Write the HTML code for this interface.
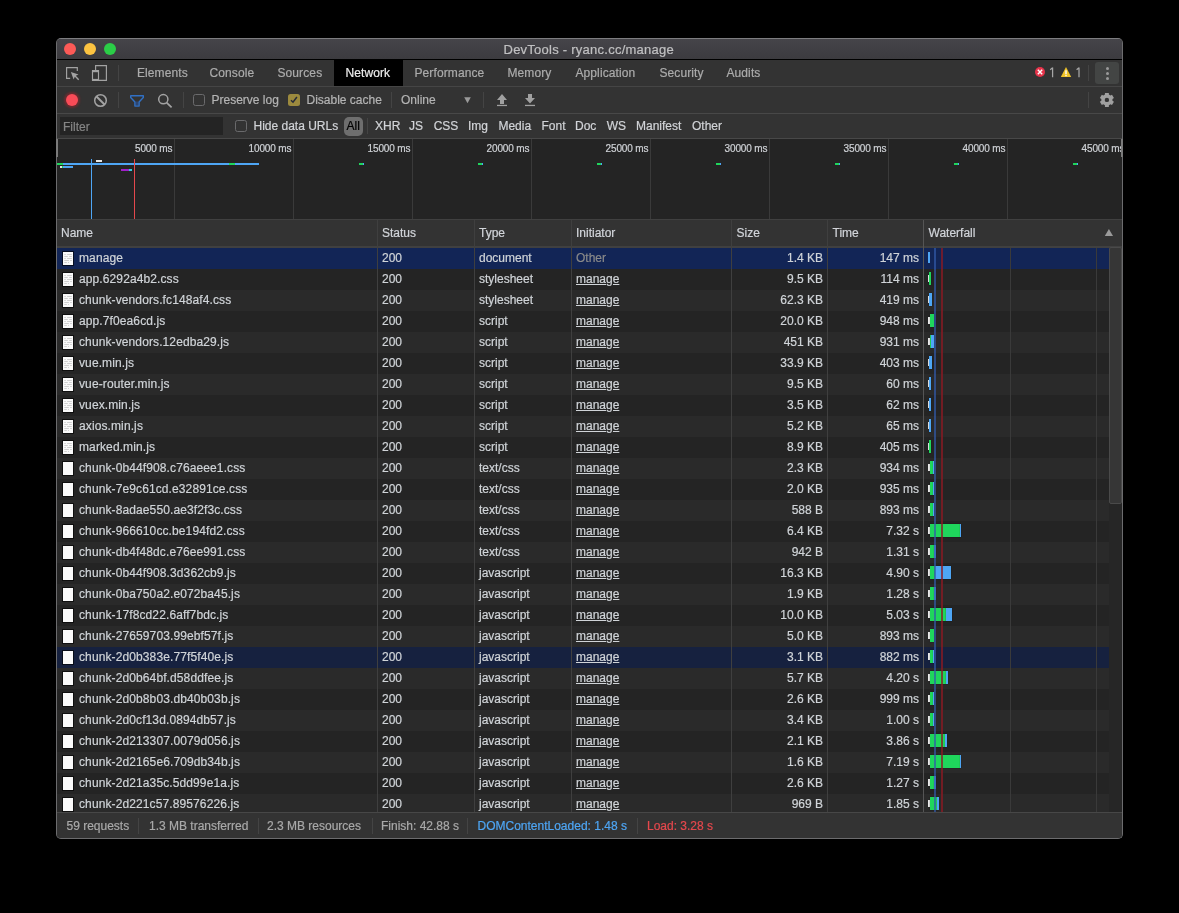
<!DOCTYPE html>
<html><head><meta charset="utf-8"><title>DevTools - ryanc.cc/manage</title>
<style>
*{box-sizing:border-box}
html,body{margin:0;padding:0;background:#000;width:1179px;height:913px;overflow:hidden;font-family:"Liberation Sans",sans-serif;font-size:12px;color:#d0d4d8}
.a{position:absolute}
.t{position:absolute;white-space:nowrap;line-height:14px;-webkit-text-stroke-width:0.2px}
#root{position:absolute;left:0;top:0;width:1179px;height:913px;overflow:hidden;will-change:transform;background:#000}
.win{position:absolute;left:56px;top:38px;width:1067px;height:801px;border-radius:5px;background:#333;border:1px solid #6c6c6e;border-top-color:#7d7d80}
</style></head><body><div id="root">

<div class="win"></div>
<div class="a" style="left:57px;top:39px;width:1065px;height:20px;background:linear-gradient(#454449,#3c3b3f);border-radius:4px 4px 0 0"></div>
<div class="a" style="left:57px;top:59px;width:1065px;height:1px;background:#000"></div>
<div class="a" style="left:64px;top:43px;width:12px;height:12px;border-radius:50%;background:#fc5a57"></div>
<div class="a" style="left:84px;top:43px;width:12px;height:12px;border-radius:50%;background:#fcc341"></div>
<div class="a" style="left:104px;top:43px;width:12px;height:12px;border-radius:50%;background:#2bcd47"></div>
<div class="t" style="left:503.5px;top:42px;font-size:13px;letter-spacing:0.25px;line-height:16px;color:#c0c0c2">DevTools - ryanc.cc/manage</div>
<div class="a" style="left:57px;top:60px;width:1065px;height:26px;background:#333"></div>
<div class="a" style="left:57px;top:86px;width:1065px;height:1px;background:#454545"></div>
<div class="a" style="left:334px;top:60px;width:69px;height:26px;background:#000"></div>
<div class="t" style="left:136.9px;top:66px;letter-spacing:0.12px;color:#acacac">Elements</div>
<div class="t" style="left:209.4px;top:66px;letter-spacing:0.12px;color:#acacac">Console</div>
<div class="t" style="left:277.4px;top:66px;letter-spacing:0.12px;color:#acacac">Sources</div>
<div class="t" style="left:345.4px;top:66px;letter-spacing:0.12px;color:#ececec">Network</div>
<div class="t" style="left:414.4px;top:66px;letter-spacing:0.12px;color:#acacac">Performance</div>
<div class="t" style="left:507.4px;top:66px;letter-spacing:0.12px;color:#acacac">Memory</div>
<div class="t" style="left:575.4px;top:66px;letter-spacing:0.12px;color:#acacac">Application</div>
<div class="t" style="left:659.4px;top:66px;letter-spacing:0.12px;color:#acacac">Security</div>
<div class="t" style="left:726.4px;top:66px;letter-spacing:0.12px;color:#acacac">Audits</div>
<svg class="a" style="left:60px;top:60px" width="26" height="26" viewBox="60 60 26 26"><path d="M70.2 78.3H66.6V67.6H77.3V71" fill="none" stroke="#a3a3a3" stroke-width="1.15"/><path d="M70.9 72L78.5 74.6L75.8 75.8L79.2 79.2L78.2 80.2L74.8 76.8L73.6 79.4Z" fill="#a3a3a3"/></svg>
<svg class="a" style="left:88px;top:60px" width="24" height="26" viewBox="88 60 24 26"><path d="M95.6 70V65.6H106.4V80.4H99" fill="none" stroke="#a3a3a3" stroke-width="1.15"/><rect x="92.5" y="70.9" width="6" height="9.5" fill="none" stroke="#a3a3a3" stroke-width="1.15"/><rect x="92" y="70" width="7" height="2.2" fill="#a3a3a3"/><rect x="92" y="78.9" width="7" height="2.1" fill="#a3a3a3"/></svg>
<div class="a" style="left:118px;top:65px;width:1px;height:16px;background:#444"></div>
<svg class="a" style="left:1034px;top:66px" width="12" height="12" viewBox="0 0 12 12"><circle cx="6" cy="6" r="5" fill="#e6334a"/><path d="M3.8 3.8L8.2 8.2M8.2 3.8L3.8 8.2" stroke="#fff" stroke-width="1.4"/></svg>
<svg class="a" style="left:1048px;top:66px" width="8" height="12" viewBox="1048 66 8 12"><path d="M1052.6 67.6V77.2M1052.6 67.8L1050.2 69.8" fill="none" stroke="#a6a6a6" stroke-width="1.25"/></svg>
<svg class="a" style="left:1060px;top:66px" width="12" height="12" viewBox="0 0 12 12"><path d="M6 1L11.2 11H0.8Z" fill="#f0c42a"/><rect x="5.3" y="4.3" width="1.4" height="4" fill="#fff"/><rect x="5.3" y="9" width="1.4" height="1.2" fill="#fff"/></svg>
<svg class="a" style="left:1074px;top:66px" width="8" height="12" viewBox="1074 66 8 12"><path d="M1079 67.6V77.2M1079 67.8L1076.6 69.8" fill="none" stroke="#a6a6a6" stroke-width="1.25"/></svg>
<div class="a" style="left:1088px;top:65px;width:1px;height:16px;background:#444"></div>
<div class="a" style="left:1095px;top:62px;width:24px;height:22px;background:#434544;border-radius:3px"></div>
<div class="a" style="left:1106px;top:67.0px;width:3px;height:3px;border-radius:50%;background:#9a9a9a"></div>
<div class="a" style="left:1106px;top:72.1px;width:3px;height:3px;border-radius:50%;background:#9a9a9a"></div>
<div class="a" style="left:1106px;top:77.2px;width:3px;height:3px;border-radius:50%;background:#9a9a9a"></div>
<div class="a" style="left:57px;top:113px;width:1065px;height:1px;background:#484848"></div>
<div class="a" style="left:66px;top:94px;width:12px;height:12px;border-radius:50%;background:#f94b57;box-shadow:0 0 2px 2px rgba(170,35,45,0.45)"></div>
<svg class="a" style="left:92px;top:92px" width="17" height="17" viewBox="92 92 17 17"><circle cx="100.5" cy="100.5" r="5.8" fill="none" stroke="#a3a3a3" stroke-width="1.5"/><path d="M96.5 96.5L104.5 104.5" stroke="#a3a3a3" stroke-width="1.9"/></svg>
<div class="a" style="left:118px;top:92px;width:1px;height:16px;background:#444"></div>
<svg class="a" style="left:128px;top:93px" width="18" height="16" viewBox="128 93 18 16"><path d="M135.5 101.5L138.5 101.5V105.8H135.5Z" fill="#2e4672"/><path d="M130.7 95.7H143.3V97.4L139.1 101.9V106.1H134.9V101.9L130.7 97.4Z" fill="none" stroke="#3170c4" stroke-width="1.4" stroke-linejoin="round"/></svg>
<svg class="a" style="left:156px;top:92px" width="18" height="18" viewBox="156 92 18 18"><circle cx="163.3" cy="99.2" r="4.6" fill="none" stroke="#a3a3a3" stroke-width="1.5"/><path d="M166.6 102.6L171.6 107.4" stroke="#a3a3a3" stroke-width="1.7"/></svg>
<div class="a" style="left:183px;top:92px;width:1px;height:16px;background:#444"></div>
<div class="a" style="left:193px;top:94px;width:12px;height:12px;border-radius:2.5px;border:1px solid #6a6a6c"></div>
<div class="t" style="left:211.5px;top:93px;color:#b4b4b4">Preserve log</div>
<div class="a" style="left:288px;top:94px;width:12px;height:12px;border-radius:2.5px;background:#9c8a3e"></div>
<svg class="a" style="left:288px;top:94px" width="12" height="12" viewBox="288 94 12 12"><path d="M291 100.3L293 102.2L296.9 97" fill="none" stroke="#262a38" stroke-width="1.5"/></svg>
<div class="t" style="left:306.5px;top:93px;color:#b4b4b4">Disable cache</div>
<div class="a" style="left:391px;top:92px;width:1px;height:16px;background:#444"></div>
<div class="t" style="left:401px;top:93px;color:#b4b4b4">Online</div>
<svg class="a" style="left:463px;top:96px" width="9" height="8" viewBox="463 96 9 8"><path d="M464.2 97.2H470.8L467.5 103.3Z" fill="#9a9a9a"/></svg>
<div class="a" style="left:483px;top:92px;width:1px;height:16px;background:#444"></div>
<svg class="a" style="left:494px;top:92px" width="45" height="16" viewBox="494 92 45 16"><path d="M502 94L507 100H504V104H500V100H497Z" fill="#a0a0a0"/><rect x="497" y="104.8" width="10" height="1.3" fill="#a0a0a0"/><path d="M528 94H532V98H535L530 103.6L525 98H528Z" fill="#a0a0a0"/><rect x="525" y="104.8" width="10" height="1.3" fill="#a0a0a0"/></svg>
<div class="a" style="left:1088px;top:92px;width:1px;height:16px;background:#444"></div>
<svg class="a" style="left:1098px;top:91px" width="18" height="18" viewBox="1098 91 18 18"><path d="M1104.95,94.60 L1104.95,92.90 L1108.85,92.90 L1108.85,94.60 L1110.51,95.56 L1111.99,94.71 L1113.94,98.09 L1112.46,98.94 L1112.46,100.86 L1113.94,101.71 L1111.99,105.09 L1110.51,104.24 L1108.85,105.20 L1108.85,106.90 L1104.95,106.90 L1104.95,105.20 L1103.29,104.24 L1101.81,105.09 L1099.86,101.71 L1101.34,100.86 L1101.34,98.94 L1099.86,98.09 L1101.81,94.71 L1103.29,95.56Z M1109.10,99.90 A2.2 2.2 0 1 0 1104.70,99.90 A2.2 2.2 0 1 0 1109.10,99.90Z" fill="#a0a0a0" fill-rule="evenodd"/></svg>
<div class="a" style="left:57px;top:138px;width:1065px;height:1px;background:#484848"></div>
<div class="a" style="left:60px;top:117px;width:163px;height:18px;background:#242424"></div>
<div class="t" style="left:63px;top:120px;color:#858585">Filter</div>
<div class="a" style="left:235px;top:120px;width:12px;height:12px;border-radius:2.5px;border:1px solid #6a6a6c"></div>
<div class="t" style="left:253.5px;top:119px;color:#d2d4d8">Hide data URLs</div>
<div class="a" style="left:344px;top:116.5px;width:19px;height:19px;border-radius:5px;background:#6e6e6e"></div>
<div class="t" style="left:346.5px;top:119px;color:#000">All</div>
<div class="a" style="left:367px;top:118px;width:1px;height:16px;background:#444"></div>
<div class="t" style="left:375px;top:119px;color:#d2d4d8">XHR</div>
<div class="t" style="left:409px;top:119px;color:#d2d4d8">JS</div>
<div class="t" style="left:433.7px;top:119px;color:#d2d4d8">CSS</div>
<div class="t" style="left:468px;top:119px;color:#d2d4d8">Img</div>
<div class="t" style="left:498.4px;top:119px;color:#d2d4d8">Media</div>
<div class="t" style="left:541.5px;top:119px;color:#d2d4d8">Font</div>
<div class="t" style="left:575px;top:119px;color:#d2d4d8">Doc</div>
<div class="t" style="left:606.7px;top:119px;color:#d2d4d8">WS</div>
<div class="t" style="left:636px;top:119px;color:#d2d4d8">Manifest</div>
<div class="t" style="left:692px;top:119px;color:#d2d4d8">Other</div>
<div class="a" style="left:57px;top:139px;width:1065px;height:80px;background:#242424"></div>
<div class="a" style="left:57px;top:219px;width:1065px;height:1px;background:#404040"></div>
<div class="a" style="left:0;top:0;width:1121px;height:220px;overflow:hidden">
<div class="a" style="left:174.0px;top:139px;width:1px;height:80px;background:#3a3a3a"></div>
<div class="t" style="right:948.7px;top:143px;font-size:10px;line-height:12px;letter-spacing:-0.15px;color:#cfd2d6">5000 ms</div>
<div class="a" style="left:293.0px;top:139px;width:1px;height:80px;background:#3a3a3a"></div>
<div class="t" style="right:829.7px;top:143px;font-size:10px;line-height:12px;letter-spacing:-0.15px;color:#cfd2d6">10000 ms</div>
<div class="a" style="left:412.0px;top:139px;width:1px;height:80px;background:#3a3a3a"></div>
<div class="t" style="right:710.7px;top:143px;font-size:10px;line-height:12px;letter-spacing:-0.15px;color:#cfd2d6">15000 ms</div>
<div class="a" style="left:531.0px;top:139px;width:1px;height:80px;background:#3a3a3a"></div>
<div class="t" style="right:591.7px;top:143px;font-size:10px;line-height:12px;letter-spacing:-0.15px;color:#cfd2d6">20000 ms</div>
<div class="a" style="left:650.0px;top:139px;width:1px;height:80px;background:#3a3a3a"></div>
<div class="t" style="right:472.7px;top:143px;font-size:10px;line-height:12px;letter-spacing:-0.15px;color:#cfd2d6">25000 ms</div>
<div class="a" style="left:769.0px;top:139px;width:1px;height:80px;background:#3a3a3a"></div>
<div class="t" style="right:353.7px;top:143px;font-size:10px;line-height:12px;letter-spacing:-0.15px;color:#cfd2d6">30000 ms</div>
<div class="a" style="left:888.0px;top:139px;width:1px;height:80px;background:#3a3a3a"></div>
<div class="t" style="right:234.7px;top:143px;font-size:10px;line-height:12px;letter-spacing:-0.15px;color:#cfd2d6">35000 ms</div>
<div class="a" style="left:1007.0px;top:139px;width:1px;height:80px;background:#3a3a3a"></div>
<div class="t" style="right:115.7px;top:143px;font-size:10px;line-height:12px;letter-spacing:-0.15px;color:#cfd2d6">40000 ms</div>
<div class="t" style="right:-3.3px;top:143px;font-size:10px;line-height:12px;letter-spacing:-0.15px;color:#cfd2d6">45000 ms</div>
</div>
<div class="a" style="left:56px;top:139px;width:2px;height:18px;background:#7a7a7a"></div>
<div class="a" style="left:1121px;top:139px;width:2px;height:18px;background:#7a7a7a"></div>
<div class="a" style="left:57px;top:163px;width:202px;height:2.4px;background:#4ea6f5"></div>
<div class="a" style="left:57px;top:163px;width:5.5px;height:2.4px;background:#1fd65c"></div>
<div class="a" style="left:228.5px;top:163px;width:6px;height:2.4px;background:#1fd65c"></div>
<div class="a" style="left:96px;top:160px;width:6px;height:2.4px;background:#e6e6e6"></div>
<div class="a" style="left:60px;top:166px;width:1.8px;height:2.4px;background:#e6e6e6"></div>
<div class="a" style="left:61.8px;top:166px;width:11.2px;height:2.4px;background:#4ea6f5"></div>
<div class="a" style="left:61.8px;top:166px;width:1.2px;height:2.4px;background:#1fd65c"></div>
<div class="a" style="left:121px;top:169px;width:8px;height:2.4px;background:#a020c8"></div>
<div class="a" style="left:129px;top:169px;width:3.3px;height:2.4px;background:#35c8e0"></div>
<div class="a" style="left:91px;top:159px;width:1px;height:60px;background:#4ea6f5"></div>
<div class="a" style="left:134px;top:159px;width:1px;height:60px;background:#e5484d"></div>
<div class="a" style="left:359.0px;top:163px;width:4px;height:2.4px;background:#1fd65c"></div>
<div class="a" style="left:363.0px;top:163px;width:1.3px;height:2.4px;background:#4ea6f5"></div>
<div class="a" style="left:478.0px;top:163px;width:4px;height:2.4px;background:#1fd65c"></div>
<div class="a" style="left:482.0px;top:163px;width:1.3px;height:2.4px;background:#4ea6f5"></div>
<div class="a" style="left:597.0px;top:163px;width:4px;height:2.4px;background:#1fd65c"></div>
<div class="a" style="left:601.0px;top:163px;width:1.3px;height:2.4px;background:#4ea6f5"></div>
<div class="a" style="left:716.0px;top:163px;width:4px;height:2.4px;background:#1fd65c"></div>
<div class="a" style="left:720.0px;top:163px;width:1.3px;height:2.4px;background:#4ea6f5"></div>
<div class="a" style="left:835.0px;top:163px;width:4px;height:2.4px;background:#1fd65c"></div>
<div class="a" style="left:839.0px;top:163px;width:1.3px;height:2.4px;background:#4ea6f5"></div>
<div class="a" style="left:954.0px;top:163px;width:4px;height:2.4px;background:#1fd65c"></div>
<div class="a" style="left:958.0px;top:163px;width:1.3px;height:2.4px;background:#4ea6f5"></div>
<div class="a" style="left:1073.0px;top:163px;width:4px;height:2.4px;background:#1fd65c"></div>
<div class="a" style="left:1077.0px;top:163px;width:1.3px;height:2.4px;background:#4ea6f5"></div>
<div class="a" style="left:57px;top:220px;width:1065px;height:26px;background:#333"></div>
<div class="a" style="left:57px;top:246px;width:1065px;height:2px;background:#404040"></div>
<div class="t" style="left:61px;top:226px;color:#d2d5da">Name</div>
<div class="t" style="left:382px;top:226px;color:#d2d5da">Status</div>
<div class="t" style="left:479px;top:226px;color:#d2d5da">Type</div>
<div class="t" style="left:576px;top:226px;color:#d2d5da">Initiator</div>
<div class="t" style="left:736.5px;top:226px;color:#d2d5da">Size</div>
<div class="t" style="left:832.5px;top:226px;color:#d2d5da">Time</div>
<div class="t" style="left:928.5px;top:226px;color:#d2d5da">Waterfall</div>
<svg class="a" style="left:1103px;top:227px" width="12" height="11" viewBox="1103 227 12 11"><path d="M1104.8 236H1113L1108.9 229Z" fill="#9a9a9a"/></svg>
<div class="a" style="left:0;top:0;width:1179px;height:812px;overflow:hidden">
<div class="a" style="left:57px;top:248px;width:1052px;height:21px;background:#122556"></div>
<div class="a" style="left:57px;top:269px;width:1052px;height:21px;background:#242424"></div>
<div class="a" style="left:57px;top:290px;width:1052px;height:21px;background:#2a2a2a"></div>
<div class="a" style="left:57px;top:311px;width:1052px;height:21px;background:#242424"></div>
<div class="a" style="left:57px;top:332px;width:1052px;height:21px;background:#2a2a2a"></div>
<div class="a" style="left:57px;top:353px;width:1052px;height:21px;background:#242424"></div>
<div class="a" style="left:57px;top:374px;width:1052px;height:21px;background:#2a2a2a"></div>
<div class="a" style="left:57px;top:395px;width:1052px;height:21px;background:#242424"></div>
<div class="a" style="left:57px;top:416px;width:1052px;height:21px;background:#2a2a2a"></div>
<div class="a" style="left:57px;top:437px;width:1052px;height:21px;background:#242424"></div>
<div class="a" style="left:57px;top:458px;width:1052px;height:21px;background:#2a2a2a"></div>
<div class="a" style="left:57px;top:479px;width:1052px;height:21px;background:#242424"></div>
<div class="a" style="left:57px;top:500px;width:1052px;height:21px;background:#2a2a2a"></div>
<div class="a" style="left:57px;top:521px;width:1052px;height:21px;background:#242424"></div>
<div class="a" style="left:57px;top:542px;width:1052px;height:21px;background:#2a2a2a"></div>
<div class="a" style="left:57px;top:563px;width:1052px;height:21px;background:#242424"></div>
<div class="a" style="left:57px;top:584px;width:1052px;height:21px;background:#2a2a2a"></div>
<div class="a" style="left:57px;top:605px;width:1052px;height:21px;background:#242424"></div>
<div class="a" style="left:57px;top:626px;width:1052px;height:21px;background:#2a2a2a"></div>
<div class="a" style="left:57px;top:647px;width:1052px;height:21px;background:#16213f"></div>
<div class="a" style="left:57px;top:668px;width:1052px;height:21px;background:#2a2a2a"></div>
<div class="a" style="left:57px;top:689px;width:1052px;height:21px;background:#242424"></div>
<div class="a" style="left:57px;top:710px;width:1052px;height:21px;background:#2a2a2a"></div>
<div class="a" style="left:57px;top:731px;width:1052px;height:21px;background:#242424"></div>
<div class="a" style="left:57px;top:752px;width:1052px;height:21px;background:#2a2a2a"></div>
<div class="a" style="left:57px;top:773px;width:1052px;height:21px;background:#242424"></div>
<div class="a" style="left:57px;top:794px;width:1052px;height:21px;background:#2a2a2a"></div>
<div class="a" style="left:377px;top:220px;width:1px;height:592px;background:#3f3f3f"></div>
<div class="a" style="left:474px;top:220px;width:1px;height:592px;background:#3f3f3f"></div>
<div class="a" style="left:571px;top:220px;width:1px;height:592px;background:#3f3f3f"></div>
<div class="a" style="left:731px;top:220px;width:1px;height:592px;background:#3f3f3f"></div>
<div class="a" style="left:827px;top:220px;width:1px;height:592px;background:#3f3f3f"></div>
<div class="a" style="left:923px;top:220px;width:1px;height:592px;background:#555"></div>
<div class="a" style="left:1010px;top:248px;width:1px;height:564px;background:#3a3a3a"></div>
<div class="a" style="left:1096px;top:248px;width:1px;height:564px;background:#3a3a3a"></div>
<div class="t" style="left:79px;top:251px;letter-spacing:0.11px">manage</div>
<div class="t" style="left:382px;top:251px">200</div>
<div class="t" style="left:479px;top:251px">document</div>
<div class="t" style="left:576px;top:251px;color:#8a8a8a">Other</div>
<div class="t" style="right:356px;top:251px">1.4 KB</div>
<div class="t" style="right:260px;top:251px">147 ms</div>
<div class="a" style="left:63px;top:252px;width:10px;height:13px;background:#fafafa;box-shadow:0 0 0 1px rgba(0,0,0,0.6)"></div>
<svg class="a" style="left:63px;top:252px" width="10" height="13" viewBox="0 0 10 13"><path d="M1.3 2.5H2.8M4.1 2.5H8.8M1.3 4.5H4.8M6.2 4.5H8.8M1.3 6.5H2.8M4.1 6.5H8.8M1.3 8.5H5.9M7.1 8.5H8.8M1.3 10.5H3.8M5.1 10.5H6" stroke="#d0d0d0" stroke-width="1"/></svg>
<div class="a" style="left:928px;top:252px;width:2.2000000000000455px;height:11px;background:#4ea6f5"></div>
<div class="t" style="left:79px;top:272px;letter-spacing:0.11px">app.6292a4b2.css</div>
<div class="t" style="left:382px;top:272px">200</div>
<div class="t" style="left:479px;top:272px">stylesheet</div>
<div class="t" style="left:576px;top:272px;text-decoration:underline">manage</div>
<div class="t" style="right:356px;top:272px">9.5 KB</div>
<div class="t" style="right:260px;top:272px">114 ms</div>
<div class="a" style="left:63px;top:273px;width:10px;height:13px;background:#fafafa;box-shadow:0 0 0 1px rgba(0,0,0,0.6)"></div>
<svg class="a" style="left:63px;top:273px" width="10" height="13" viewBox="0 0 10 13"><path d="M1.3 2.5H2.8M4.1 2.5H8.8M1.3 4.5H4.8M6.2 4.5H8.8M1.3 6.5H2.8M4.1 6.5H8.8M1.3 8.5H5.9M7.1 8.5H8.8M1.3 10.5H3.8M5.1 10.5H6" stroke="#d0d0d0" stroke-width="1"/></svg>
<div class="a" style="left:928px;top:275px;width:1px;height:7px;background:#e8e8e8"></div>
<div class="a" style="left:929px;top:272px;width:2px;height:13px;background:#1fd65c;box-shadow:0 0 1px rgba(0,0,0,0.6)"></div>
<div class="t" style="left:79px;top:293px;letter-spacing:0.11px">chunk-vendors.fc148af4.css</div>
<div class="t" style="left:382px;top:293px">200</div>
<div class="t" style="left:479px;top:293px">stylesheet</div>
<div class="t" style="left:576px;top:293px;text-decoration:underline">manage</div>
<div class="t" style="right:356px;top:293px">62.3 KB</div>
<div class="t" style="right:260px;top:293px">419 ms</div>
<div class="a" style="left:63px;top:294px;width:10px;height:13px;background:#fafafa;box-shadow:0 0 0 1px rgba(0,0,0,0.6)"></div>
<svg class="a" style="left:63px;top:294px" width="10" height="13" viewBox="0 0 10 13"><path d="M1.3 2.5H2.8M4.1 2.5H8.8M1.3 4.5H4.8M6.2 4.5H8.8M1.3 6.5H2.8M4.1 6.5H8.8M1.3 8.5H5.9M7.1 8.5H8.8M1.3 10.5H3.8M5.1 10.5H6" stroke="#d0d0d0" stroke-width="1"/></svg>
<div class="a" style="left:928px;top:296px;width:1px;height:7px;background:#e8e8e8"></div>
<div class="a" style="left:929px;top:293px;width:3px;height:13px;background:#4ea6f5;box-shadow:0 0 1px rgba(0,0,0,0.6)"></div>
<div class="t" style="left:79px;top:314px;letter-spacing:0.11px">app.7f0ea6cd.js</div>
<div class="t" style="left:382px;top:314px">200</div>
<div class="t" style="left:479px;top:314px">script</div>
<div class="t" style="left:576px;top:314px;text-decoration:underline">manage</div>
<div class="t" style="right:356px;top:314px">20.0 KB</div>
<div class="t" style="right:260px;top:314px">948 ms</div>
<div class="a" style="left:63px;top:315px;width:10px;height:13px;background:#fafafa;box-shadow:0 0 0 1px rgba(0,0,0,0.6)"></div>
<svg class="a" style="left:63px;top:315px" width="10" height="13" viewBox="0 0 10 13"><path d="M1.3 2.5H2.8M4.1 2.5H8.8M1.3 4.5H4.8M6.2 4.5H8.8M1.3 6.5H2.8M4.1 6.5H8.8M1.3 8.5H5.9M7.1 8.5H8.8M1.3 10.5H3.8M5.1 10.5H6" stroke="#d0d0d0" stroke-width="1"/></svg>
<div class="a" style="left:928px;top:317px;width:2px;height:7px;background:#e8e8e8"></div>
<div class="a" style="left:930px;top:314px;width:4px;height:13px;background:#1fd65c;box-shadow:0 0 1px rgba(0,0,0,0.6)"></div>
<div class="t" style="left:79px;top:335px;letter-spacing:0.11px">chunk-vendors.12edba29.js</div>
<div class="t" style="left:382px;top:335px">200</div>
<div class="t" style="left:479px;top:335px">script</div>
<div class="t" style="left:576px;top:335px;text-decoration:underline">manage</div>
<div class="t" style="right:356px;top:335px">451 KB</div>
<div class="t" style="right:260px;top:335px">931 ms</div>
<div class="a" style="left:63px;top:336px;width:10px;height:13px;background:#fafafa;box-shadow:0 0 0 1px rgba(0,0,0,0.6)"></div>
<svg class="a" style="left:63px;top:336px" width="10" height="13" viewBox="0 0 10 13"><path d="M1.3 2.5H2.8M4.1 2.5H8.8M1.3 4.5H4.8M6.2 4.5H8.8M1.3 6.5H2.8M4.1 6.5H8.8M1.3 8.5H5.9M7.1 8.5H8.8M1.3 10.5H3.8M5.1 10.5H6" stroke="#d0d0d0" stroke-width="1"/></svg>
<div class="a" style="left:928px;top:338px;width:2px;height:7px;background:#e8e8e8"></div>
<div class="a" style="left:930px;top:335px;width:1px;height:13px;background:#1fd65c;box-shadow:0 0 1px rgba(0,0,0,0.6)"></div>
<div class="a" style="left:931px;top:335px;width:3px;height:13px;background:#4ea6f5;box-shadow:0 0 1px rgba(0,0,0,0.6)"></div>
<div class="t" style="left:79px;top:356px;letter-spacing:0.11px">vue.min.js</div>
<div class="t" style="left:382px;top:356px">200</div>
<div class="t" style="left:479px;top:356px">script</div>
<div class="t" style="left:576px;top:356px;text-decoration:underline">manage</div>
<div class="t" style="right:356px;top:356px">33.9 KB</div>
<div class="t" style="right:260px;top:356px">403 ms</div>
<div class="a" style="left:63px;top:357px;width:10px;height:13px;background:#fafafa;box-shadow:0 0 0 1px rgba(0,0,0,0.6)"></div>
<svg class="a" style="left:63px;top:357px" width="10" height="13" viewBox="0 0 10 13"><path d="M1.3 2.5H2.8M4.1 2.5H8.8M1.3 4.5H4.8M6.2 4.5H8.8M1.3 6.5H2.8M4.1 6.5H8.8M1.3 8.5H5.9M7.1 8.5H8.8M1.3 10.5H3.8M5.1 10.5H6" stroke="#d0d0d0" stroke-width="1"/></svg>
<div class="a" style="left:928px;top:359px;width:1px;height:7px;background:#e8e8e8"></div>
<div class="a" style="left:929px;top:356px;width:3px;height:13px;background:#4ea6f5;box-shadow:0 0 1px rgba(0,0,0,0.6)"></div>
<div class="t" style="left:79px;top:377px;letter-spacing:0.11px">vue-router.min.js</div>
<div class="t" style="left:382px;top:377px">200</div>
<div class="t" style="left:479px;top:377px">script</div>
<div class="t" style="left:576px;top:377px;text-decoration:underline">manage</div>
<div class="t" style="right:356px;top:377px">9.5 KB</div>
<div class="t" style="right:260px;top:377px">60 ms</div>
<div class="a" style="left:63px;top:378px;width:10px;height:13px;background:#fafafa;box-shadow:0 0 0 1px rgba(0,0,0,0.6)"></div>
<svg class="a" style="left:63px;top:378px" width="10" height="13" viewBox="0 0 10 13"><path d="M1.3 2.5H2.8M4.1 2.5H8.8M1.3 4.5H4.8M6.2 4.5H8.8M1.3 6.5H2.8M4.1 6.5H8.8M1.3 8.5H5.9M7.1 8.5H8.8M1.3 10.5H3.8M5.1 10.5H6" stroke="#d0d0d0" stroke-width="1"/></svg>
<div class="a" style="left:928px;top:380px;width:1px;height:7px;background:#e8e8e8"></div>
<div class="a" style="left:929px;top:377px;width:2px;height:13px;background:#4ea6f5;box-shadow:0 0 1px rgba(0,0,0,0.6)"></div>
<div class="t" style="left:79px;top:398px;letter-spacing:0.11px">vuex.min.js</div>
<div class="t" style="left:382px;top:398px">200</div>
<div class="t" style="left:479px;top:398px">script</div>
<div class="t" style="left:576px;top:398px;text-decoration:underline">manage</div>
<div class="t" style="right:356px;top:398px">3.5 KB</div>
<div class="t" style="right:260px;top:398px">62 ms</div>
<div class="a" style="left:63px;top:399px;width:10px;height:13px;background:#fafafa;box-shadow:0 0 0 1px rgba(0,0,0,0.6)"></div>
<svg class="a" style="left:63px;top:399px" width="10" height="13" viewBox="0 0 10 13"><path d="M1.3 2.5H2.8M4.1 2.5H8.8M1.3 4.5H4.8M6.2 4.5H8.8M1.3 6.5H2.8M4.1 6.5H8.8M1.3 8.5H5.9M7.1 8.5H8.8M1.3 10.5H3.8M5.1 10.5H6" stroke="#d0d0d0" stroke-width="1"/></svg>
<div class="a" style="left:928px;top:401px;width:1px;height:7px;background:#e8e8e8"></div>
<div class="a" style="left:929px;top:398px;width:2px;height:13px;background:#4ea6f5;box-shadow:0 0 1px rgba(0,0,0,0.6)"></div>
<div class="t" style="left:79px;top:419px;letter-spacing:0.11px">axios.min.js</div>
<div class="t" style="left:382px;top:419px">200</div>
<div class="t" style="left:479px;top:419px">script</div>
<div class="t" style="left:576px;top:419px;text-decoration:underline">manage</div>
<div class="t" style="right:356px;top:419px">5.2 KB</div>
<div class="t" style="right:260px;top:419px">65 ms</div>
<div class="a" style="left:63px;top:420px;width:10px;height:13px;background:#fafafa;box-shadow:0 0 0 1px rgba(0,0,0,0.6)"></div>
<svg class="a" style="left:63px;top:420px" width="10" height="13" viewBox="0 0 10 13"><path d="M1.3 2.5H2.8M4.1 2.5H8.8M1.3 4.5H4.8M6.2 4.5H8.8M1.3 6.5H2.8M4.1 6.5H8.8M1.3 8.5H5.9M7.1 8.5H8.8M1.3 10.5H3.8M5.1 10.5H6" stroke="#d0d0d0" stroke-width="1"/></svg>
<div class="a" style="left:928px;top:422px;width:1px;height:7px;background:#e8e8e8"></div>
<div class="a" style="left:929px;top:419px;width:2px;height:13px;background:#4ea6f5;box-shadow:0 0 1px rgba(0,0,0,0.6)"></div>
<div class="t" style="left:79px;top:440px;letter-spacing:0.11px">marked.min.js</div>
<div class="t" style="left:382px;top:440px">200</div>
<div class="t" style="left:479px;top:440px">script</div>
<div class="t" style="left:576px;top:440px;text-decoration:underline">manage</div>
<div class="t" style="right:356px;top:440px">8.9 KB</div>
<div class="t" style="right:260px;top:440px">405 ms</div>
<div class="a" style="left:63px;top:441px;width:10px;height:13px;background:#fafafa;box-shadow:0 0 0 1px rgba(0,0,0,0.6)"></div>
<svg class="a" style="left:63px;top:441px" width="10" height="13" viewBox="0 0 10 13"><path d="M1.3 2.5H2.8M4.1 2.5H8.8M1.3 4.5H4.8M6.2 4.5H8.8M1.3 6.5H2.8M4.1 6.5H8.8M1.3 8.5H5.9M7.1 8.5H8.8M1.3 10.5H3.8M5.1 10.5H6" stroke="#d0d0d0" stroke-width="1"/></svg>
<div class="a" style="left:928px;top:443px;width:1px;height:7px;background:#e8e8e8"></div>
<div class="a" style="left:929px;top:440px;width:2px;height:13px;background:#1fd65c;box-shadow:0 0 1px rgba(0,0,0,0.6)"></div>
<div class="t" style="left:79px;top:461px;letter-spacing:0.11px">chunk-0b44f908.c76aeee1.css</div>
<div class="t" style="left:382px;top:461px">200</div>
<div class="t" style="left:479px;top:461px">text/css</div>
<div class="t" style="left:576px;top:461px;text-decoration:underline">manage</div>
<div class="t" style="right:356px;top:461px">2.3 KB</div>
<div class="t" style="right:260px;top:461px">934 ms</div>
<div class="a" style="left:63px;top:462px;width:10px;height:13px;background:#fafafa;box-shadow:0 0 0 1px rgba(0,0,0,0.6)"></div>
<div class="a" style="left:928px;top:464px;width:2px;height:7px;background:#e8e8e8"></div>
<div class="a" style="left:930px;top:461px;width:3.2999999999999545px;height:13px;background:#1fd65c;box-shadow:0 0 1px rgba(0,0,0,0.6)"></div>
<div class="a" style="left:933.3px;top:461px;width:1.0px;height:13px;background:#4ea6f5;box-shadow:0 0 1px rgba(0,0,0,0.6)"></div>
<div class="t" style="left:79px;top:482px;letter-spacing:0.11px">chunk-7e9c61cd.e32891ce.css</div>
<div class="t" style="left:382px;top:482px">200</div>
<div class="t" style="left:479px;top:482px">text/css</div>
<div class="t" style="left:576px;top:482px;text-decoration:underline">manage</div>
<div class="t" style="right:356px;top:482px">2.0 KB</div>
<div class="t" style="right:260px;top:482px">935 ms</div>
<div class="a" style="left:63px;top:483px;width:10px;height:13px;background:#fafafa;box-shadow:0 0 0 1px rgba(0,0,0,0.6)"></div>
<div class="a" style="left:928px;top:485px;width:2px;height:7px;background:#e8e8e8"></div>
<div class="a" style="left:930px;top:482px;width:3.2999999999999545px;height:13px;background:#1fd65c;box-shadow:0 0 1px rgba(0,0,0,0.6)"></div>
<div class="a" style="left:933.3px;top:482px;width:1.0px;height:13px;background:#4ea6f5;box-shadow:0 0 1px rgba(0,0,0,0.6)"></div>
<div class="t" style="left:79px;top:503px;letter-spacing:0.11px">chunk-8adae550.ae3f2f3c.css</div>
<div class="t" style="left:382px;top:503px">200</div>
<div class="t" style="left:479px;top:503px">text/css</div>
<div class="t" style="left:576px;top:503px;text-decoration:underline">manage</div>
<div class="t" style="right:356px;top:503px">588 B</div>
<div class="t" style="right:260px;top:503px">893 ms</div>
<div class="a" style="left:63px;top:504px;width:10px;height:13px;background:#fafafa;box-shadow:0 0 0 1px rgba(0,0,0,0.6)"></div>
<div class="a" style="left:928px;top:506px;width:2px;height:7px;background:#e8e8e8"></div>
<div class="a" style="left:930px;top:503px;width:3.2999999999999545px;height:13px;background:#1fd65c;box-shadow:0 0 1px rgba(0,0,0,0.6)"></div>
<div class="a" style="left:933.3px;top:503px;width:1.0px;height:13px;background:#4ea6f5;box-shadow:0 0 1px rgba(0,0,0,0.6)"></div>
<div class="t" style="left:79px;top:524px;letter-spacing:0.11px">chunk-966610cc.be194fd2.css</div>
<div class="t" style="left:382px;top:524px">200</div>
<div class="t" style="left:479px;top:524px">text/css</div>
<div class="t" style="left:576px;top:524px;text-decoration:underline">manage</div>
<div class="t" style="right:356px;top:524px">6.4 KB</div>
<div class="t" style="right:260px;top:524px">7.32 s</div>
<div class="a" style="left:63px;top:525px;width:10px;height:13px;background:#fafafa;box-shadow:0 0 0 1px rgba(0,0,0,0.6)"></div>
<div class="a" style="left:928px;top:527px;width:2px;height:7px;background:#e8e8e8"></div>
<div class="a" style="left:930px;top:524px;width:30px;height:13px;background:#1fd65c;box-shadow:0 0 1px rgba(0,0,0,0.6)"></div>
<div class="a" style="left:960px;top:524px;width:1.2999999999999545px;height:13px;background:#4ea6f5;box-shadow:0 0 1px rgba(0,0,0,0.6)"></div>
<div class="t" style="left:79px;top:545px;letter-spacing:0.11px">chunk-db4f48dc.e76ee991.css</div>
<div class="t" style="left:382px;top:545px">200</div>
<div class="t" style="left:479px;top:545px">text/css</div>
<div class="t" style="left:576px;top:545px;text-decoration:underline">manage</div>
<div class="t" style="right:356px;top:545px">942 B</div>
<div class="t" style="right:260px;top:545px">1.31 s</div>
<div class="a" style="left:63px;top:546px;width:10px;height:13px;background:#fafafa;box-shadow:0 0 0 1px rgba(0,0,0,0.6)"></div>
<div class="a" style="left:928px;top:548px;width:2px;height:7px;background:#e8e8e8"></div>
<div class="a" style="left:930px;top:545px;width:4px;height:13px;background:#1fd65c;box-shadow:0 0 1px rgba(0,0,0,0.6)"></div>
<div class="a" style="left:934px;top:545px;width:1.5px;height:13px;background:#4ea6f5;box-shadow:0 0 1px rgba(0,0,0,0.6)"></div>
<div class="t" style="left:79px;top:566px;letter-spacing:0.11px">chunk-0b44f908.3d362cb9.js</div>
<div class="t" style="left:382px;top:566px">200</div>
<div class="t" style="left:479px;top:566px">javascript</div>
<div class="t" style="left:576px;top:566px;text-decoration:underline">manage</div>
<div class="t" style="right:356px;top:566px">16.3 KB</div>
<div class="t" style="right:260px;top:566px">4.90 s</div>
<div class="a" style="left:63px;top:567px;width:10px;height:13px;background:#fafafa;box-shadow:0 0 0 1px rgba(0,0,0,0.6)"></div>
<div class="a" style="left:928px;top:569px;width:2px;height:7px;background:#e8e8e8"></div>
<div class="a" style="left:930px;top:566px;width:5px;height:13px;background:#1fd65c;box-shadow:0 0 1px rgba(0,0,0,0.6)"></div>
<div class="a" style="left:935px;top:566px;width:16px;height:13px;background:#4ea6f5;box-shadow:0 0 1px rgba(0,0,0,0.6)"></div>
<div class="t" style="left:79px;top:587px;letter-spacing:0.11px">chunk-0ba750a2.e072ba45.js</div>
<div class="t" style="left:382px;top:587px">200</div>
<div class="t" style="left:479px;top:587px">javascript</div>
<div class="t" style="left:576px;top:587px;text-decoration:underline">manage</div>
<div class="t" style="right:356px;top:587px">1.9 KB</div>
<div class="t" style="right:260px;top:587px">1.28 s</div>
<div class="a" style="left:63px;top:588px;width:10px;height:13px;background:#fafafa;box-shadow:0 0 0 1px rgba(0,0,0,0.6)"></div>
<div class="a" style="left:928px;top:590px;width:2px;height:7px;background:#e8e8e8"></div>
<div class="a" style="left:930px;top:587px;width:4px;height:13px;background:#1fd65c;box-shadow:0 0 1px rgba(0,0,0,0.6)"></div>
<div class="a" style="left:934px;top:587px;width:2px;height:13px;background:#4ea6f5;box-shadow:0 0 1px rgba(0,0,0,0.6)"></div>
<div class="t" style="left:79px;top:608px;letter-spacing:0.11px">chunk-17f8cd22.6aff7bdc.js</div>
<div class="t" style="left:382px;top:608px">200</div>
<div class="t" style="left:479px;top:608px">javascript</div>
<div class="t" style="left:576px;top:608px;text-decoration:underline">manage</div>
<div class="t" style="right:356px;top:608px">10.0 KB</div>
<div class="t" style="right:260px;top:608px">5.03 s</div>
<div class="a" style="left:63px;top:609px;width:10px;height:13px;background:#fafafa;box-shadow:0 0 0 1px rgba(0,0,0,0.6)"></div>
<div class="a" style="left:928px;top:611px;width:2px;height:7px;background:#e8e8e8"></div>
<div class="a" style="left:930px;top:608px;width:15.700000000000045px;height:13px;background:#1fd65c;box-shadow:0 0 1px rgba(0,0,0,0.6)"></div>
<div class="a" style="left:945.7px;top:608px;width:6.2999999999999545px;height:13px;background:#4ea6f5;box-shadow:0 0 1px rgba(0,0,0,0.6)"></div>
<div class="t" style="left:79px;top:629px;letter-spacing:0.11px">chunk-27659703.99ebf57f.js</div>
<div class="t" style="left:382px;top:629px">200</div>
<div class="t" style="left:479px;top:629px">javascript</div>
<div class="t" style="left:576px;top:629px;text-decoration:underline">manage</div>
<div class="t" style="right:356px;top:629px">5.0 KB</div>
<div class="t" style="right:260px;top:629px">893 ms</div>
<div class="a" style="left:63px;top:630px;width:10px;height:13px;background:#fafafa;box-shadow:0 0 0 1px rgba(0,0,0,0.6)"></div>
<div class="a" style="left:928px;top:632px;width:2px;height:7px;background:#e8e8e8"></div>
<div class="a" style="left:930px;top:629px;width:3.7999999999999545px;height:13px;background:#1fd65c;box-shadow:0 0 1px rgba(0,0,0,0.6)"></div>
<div class="t" style="left:79px;top:650px;letter-spacing:0.11px">chunk-2d0b383e.77f5f40e.js</div>
<div class="t" style="left:382px;top:650px">200</div>
<div class="t" style="left:479px;top:650px">javascript</div>
<div class="t" style="left:576px;top:650px;text-decoration:underline">manage</div>
<div class="t" style="right:356px;top:650px">3.1 KB</div>
<div class="t" style="right:260px;top:650px">882 ms</div>
<div class="a" style="left:63px;top:651px;width:10px;height:13px;background:#fafafa;box-shadow:0 0 0 1px rgba(0,0,0,0.6)"></div>
<div class="a" style="left:928px;top:653px;width:2px;height:7px;background:#e8e8e8"></div>
<div class="a" style="left:930px;top:650px;width:3.2999999999999545px;height:13px;background:#1fd65c;box-shadow:0 0 1px rgba(0,0,0,0.6)"></div>
<div class="a" style="left:933.3px;top:650px;width:1.0px;height:13px;background:#4ea6f5;box-shadow:0 0 1px rgba(0,0,0,0.6)"></div>
<div class="t" style="left:79px;top:671px;letter-spacing:0.11px">chunk-2d0b64bf.d58ddfee.js</div>
<div class="t" style="left:382px;top:671px">200</div>
<div class="t" style="left:479px;top:671px">javascript</div>
<div class="t" style="left:576px;top:671px;text-decoration:underline">manage</div>
<div class="t" style="right:356px;top:671px">5.7 KB</div>
<div class="t" style="right:260px;top:671px">4.20 s</div>
<div class="a" style="left:63px;top:672px;width:10px;height:13px;background:#fafafa;box-shadow:0 0 0 1px rgba(0,0,0,0.6)"></div>
<div class="a" style="left:928px;top:674px;width:2px;height:7px;background:#e8e8e8"></div>
<div class="a" style="left:930px;top:671px;width:16px;height:13px;background:#1fd65c;box-shadow:0 0 1px rgba(0,0,0,0.6)"></div>
<div class="a" style="left:946px;top:671px;width:2px;height:13px;background:#4ea6f5;box-shadow:0 0 1px rgba(0,0,0,0.6)"></div>
<div class="t" style="left:79px;top:692px;letter-spacing:0.11px">chunk-2d0b8b03.db40b03b.js</div>
<div class="t" style="left:382px;top:692px">200</div>
<div class="t" style="left:479px;top:692px">javascript</div>
<div class="t" style="left:576px;top:692px;text-decoration:underline">manage</div>
<div class="t" style="right:356px;top:692px">2.6 KB</div>
<div class="t" style="right:260px;top:692px">999 ms</div>
<div class="a" style="left:63px;top:693px;width:10px;height:13px;background:#fafafa;box-shadow:0 0 0 1px rgba(0,0,0,0.6)"></div>
<div class="a" style="left:928px;top:695px;width:2px;height:7px;background:#e8e8e8"></div>
<div class="a" style="left:930px;top:692px;width:3px;height:13px;background:#1fd65c;box-shadow:0 0 1px rgba(0,0,0,0.6)"></div>
<div class="a" style="left:933px;top:692px;width:1.2999999999999545px;height:13px;background:#4ea6f5;box-shadow:0 0 1px rgba(0,0,0,0.6)"></div>
<div class="t" style="left:79px;top:713px;letter-spacing:0.11px">chunk-2d0cf13d.0894db57.js</div>
<div class="t" style="left:382px;top:713px">200</div>
<div class="t" style="left:479px;top:713px">javascript</div>
<div class="t" style="left:576px;top:713px;text-decoration:underline">manage</div>
<div class="t" style="right:356px;top:713px">3.4 KB</div>
<div class="t" style="right:260px;top:713px">1.00 s</div>
<div class="a" style="left:63px;top:714px;width:10px;height:13px;background:#fafafa;box-shadow:0 0 0 1px rgba(0,0,0,0.6)"></div>
<div class="a" style="left:928px;top:716px;width:2px;height:7px;background:#e8e8e8"></div>
<div class="a" style="left:930px;top:713px;width:3px;height:13px;background:#1fd65c;box-shadow:0 0 1px rgba(0,0,0,0.6)"></div>
<div class="a" style="left:933px;top:713px;width:1.2999999999999545px;height:13px;background:#4ea6f5;box-shadow:0 0 1px rgba(0,0,0,0.6)"></div>
<div class="t" style="left:79px;top:734px;letter-spacing:0.11px">chunk-2d213307.0079d056.js</div>
<div class="t" style="left:382px;top:734px">200</div>
<div class="t" style="left:479px;top:734px">javascript</div>
<div class="t" style="left:576px;top:734px;text-decoration:underline">manage</div>
<div class="t" style="right:356px;top:734px">2.1 KB</div>
<div class="t" style="right:260px;top:734px">3.86 s</div>
<div class="a" style="left:63px;top:735px;width:10px;height:13px;background:#fafafa;box-shadow:0 0 0 1px rgba(0,0,0,0.6)"></div>
<div class="a" style="left:928px;top:737px;width:2px;height:7px;background:#e8e8e8"></div>
<div class="a" style="left:930px;top:734px;width:15.299999999999955px;height:13px;background:#1fd65c;box-shadow:0 0 1px rgba(0,0,0,0.6)"></div>
<div class="a" style="left:945.3px;top:734px;width:1.7000000000000455px;height:13px;background:#4ea6f5;box-shadow:0 0 1px rgba(0,0,0,0.6)"></div>
<div class="t" style="left:79px;top:755px;letter-spacing:0.11px">chunk-2d2165e6.709db34b.js</div>
<div class="t" style="left:382px;top:755px">200</div>
<div class="t" style="left:479px;top:755px">javascript</div>
<div class="t" style="left:576px;top:755px;text-decoration:underline">manage</div>
<div class="t" style="right:356px;top:755px">1.6 KB</div>
<div class="t" style="right:260px;top:755px">7.19 s</div>
<div class="a" style="left:63px;top:756px;width:10px;height:13px;background:#fafafa;box-shadow:0 0 0 1px rgba(0,0,0,0.6)"></div>
<div class="a" style="left:928px;top:758px;width:2px;height:7px;background:#e8e8e8"></div>
<div class="a" style="left:930px;top:755px;width:30px;height:13px;background:#1fd65c;box-shadow:0 0 1px rgba(0,0,0,0.6)"></div>
<div class="a" style="left:960px;top:755px;width:1px;height:13px;background:#4ea6f5;box-shadow:0 0 1px rgba(0,0,0,0.6)"></div>
<div class="t" style="left:79px;top:776px;letter-spacing:0.11px">chunk-2d21a35c.5dd99e1a.js</div>
<div class="t" style="left:382px;top:776px">200</div>
<div class="t" style="left:479px;top:776px">javascript</div>
<div class="t" style="left:576px;top:776px;text-decoration:underline">manage</div>
<div class="t" style="right:356px;top:776px">2.6 KB</div>
<div class="t" style="right:260px;top:776px">1.27 s</div>
<div class="a" style="left:63px;top:777px;width:10px;height:13px;background:#fafafa;box-shadow:0 0 0 1px rgba(0,0,0,0.6)"></div>
<div class="a" style="left:928px;top:779px;width:2px;height:7px;background:#e8e8e8"></div>
<div class="a" style="left:930px;top:776px;width:4.2999999999999545px;height:13px;background:#1fd65c;box-shadow:0 0 1px rgba(0,0,0,0.6)"></div>
<div class="a" style="left:934.3px;top:776px;width:1.7000000000000455px;height:13px;background:#4ea6f5;box-shadow:0 0 1px rgba(0,0,0,0.6)"></div>
<div class="t" style="left:79px;top:797px;letter-spacing:0.11px">chunk-2d221c57.89576226.js</div>
<div class="t" style="left:382px;top:797px">200</div>
<div class="t" style="left:479px;top:797px">javascript</div>
<div class="t" style="left:576px;top:797px;text-decoration:underline">manage</div>
<div class="t" style="right:356px;top:797px">969 B</div>
<div class="t" style="right:260px;top:797px">1.85 s</div>
<div class="a" style="left:63px;top:798px;width:10px;height:13px;background:#fafafa;box-shadow:0 0 0 1px rgba(0,0,0,0.6)"></div>
<div class="a" style="left:928px;top:800px;width:2px;height:7px;background:#e8e8e8"></div>
<div class="a" style="left:930px;top:797px;width:7px;height:13px;background:#1fd65c;box-shadow:0 0 1px rgba(0,0,0,0.6)"></div>
<div class="a" style="left:937px;top:797px;width:1.5px;height:13px;background:#4ea6f5;box-shadow:0 0 1px rgba(0,0,0,0.6)"></div>
<div class="a" style="left:934px;top:248px;width:2px;height:564px;background:rgba(50,90,170,0.7)"></div>
<div class="a" style="left:941px;top:248px;width:2px;height:564px;background:rgba(140,25,35,0.75)"></div>
<div class="a" style="left:1109px;top:248px;width:13px;height:564px;background:#262626"></div>
<div class="a" style="left:1109px;top:247px;width:13px;height:257px;background:#363636;border:1px solid #4a4a4a;border-radius:2px"></div>
</div>
<div class="a" style="left:57px;top:812px;width:1065px;height:1px;background:#474747"></div>
<div class="a" style="left:57px;top:813px;width:1065px;height:25px;background:#333;border-radius:0 0 4px 4px"></div>
<div class="t" style="left:66.5px;top:819px;color:#a9a9a9">59 requests</div>
<div class="t" style="left:149px;top:819px;color:#a9a9a9">1.3 MB transferred</div>
<div class="t" style="left:267px;top:819px;color:#a9a9a9">2.3 MB resources</div>
<div class="t" style="left:381px;top:819px;color:#a9a9a9">Finish: 42.88 s</div>
<div class="t" style="left:477.5px;top:819px;color:#4ea6f5">DOMContentLoaded: 1.48 s</div>
<div class="t" style="left:647px;top:819px;color:#e5484d">Load: 3.28 s</div>
<div class="a" style="left:138px;top:818px;width:1px;height:16px;background:#444"></div>
<div class="a" style="left:258px;top:818px;width:1px;height:16px;background:#444"></div>
<div class="a" style="left:372px;top:818px;width:1px;height:16px;background:#444"></div>
<div class="a" style="left:467px;top:818px;width:1px;height:16px;background:#444"></div>
<div class="a" style="left:637px;top:818px;width:1px;height:16px;background:#444"></div>
</div></body></html>
